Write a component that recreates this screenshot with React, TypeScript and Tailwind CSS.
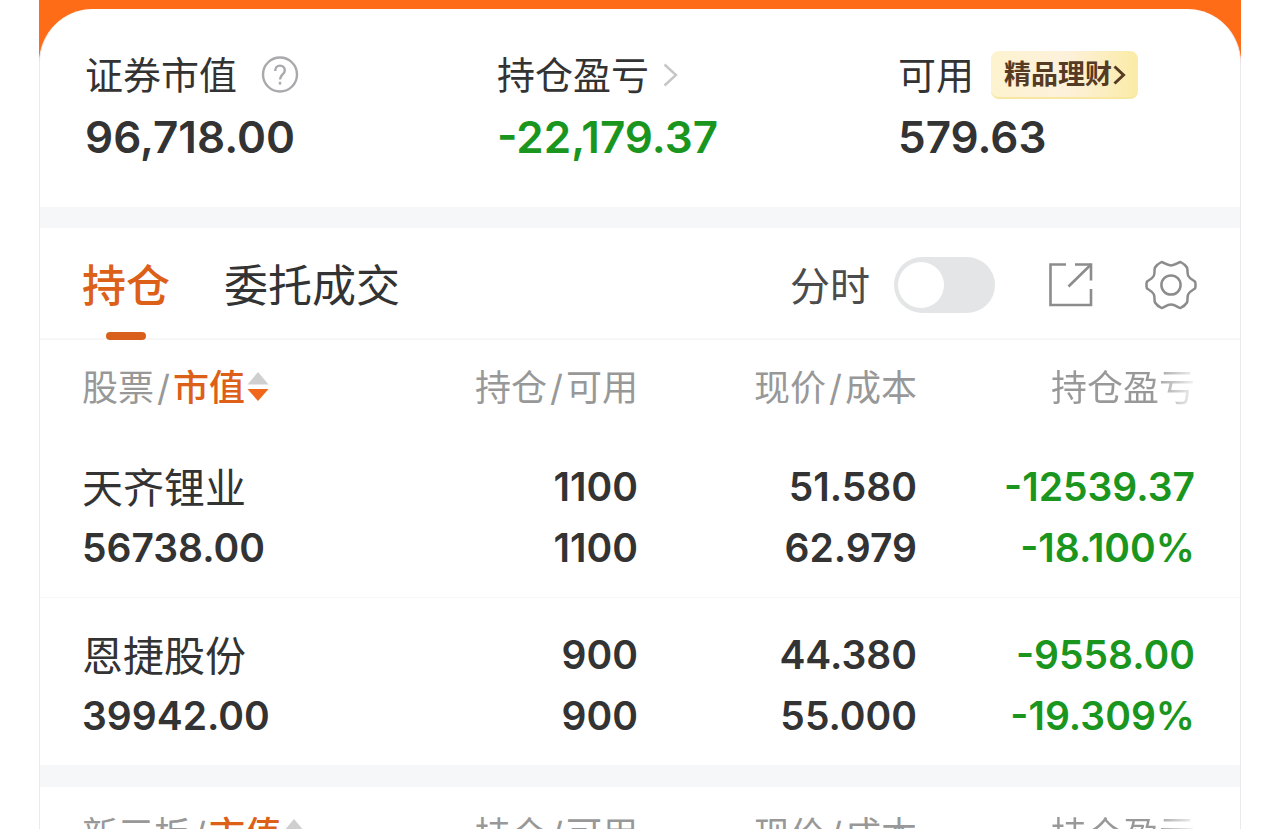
import React from "react";

type Holding = {
  name: string;
  value: string;
  amount: string;
  available: string;
  price: string;
  cost: string;
  profit: string;
  rate: string;
};

const holdings: Holding[] = [
  {
    name: "天齐锂业",
    value: "56738.00",
    amount: "1100",
    available: "1100",
    price: "51.580",
    cost: "62.979",
    profit: "-12539.37",
    rate: "-18.100%",
  },
  {
    name: "恩捷股份",
    value: "39942.00",
    amount: "900",
    available: "900",
    price: "44.380",
    cost: "55.000",
    profit: "-9558.00",
    rate: "-19.309%",
  },
];

function SortIcon() {
  return (
    <svg width="22" height="32" viewBox="0 0 22 32" className="ml-[2px] shrink-0" aria-hidden="true">
      <path d="M11 0 L21.5 12.5 H0.5 Z" fill="#cfcfcf" />
      <path d="M0.5 17 H21.5 L11 29 Z" fill="#f0661a" />
    </svg>
  );
}

function Slash() {
  return <span className="mx-[3px]">/</span>;
}

function Columns() {
  return (
    <colgroup>
      <col className="w-[320px]" />
      <col className="w-[278px]" />
      <col className="w-[279px]" />
      <col className="w-[323px]" />
    </colgroup>
  );
}

function HeaderRow({ label }: { label: string }) {
  return (
    <thead>
      <tr className="h-[90px] whitespace-nowrap text-4xl text-[#989898]">
        <th scope="col" className="pl-[42px] pt-[6px] text-left font-normal">
          <button type="button" className="flex items-center">
            {label}
            <Slash />
            <span className="font-medium text-[#dc6018]">市值</span>
            <SortIcon />
          </button>
        </th>
        <th scope="col" className="pt-[6px] text-right font-normal">
          持仓
          <Slash />
          可用
        </th>
        <th scope="col" className="pt-[6px] text-right font-normal">
          现价
          <Slash />
          成本
        </th>
        <th scope="col" className="pr-[45px] pt-[6px] text-right font-normal">
          <span className="bg-linear-to-r from-[#989898] from-70% to-[#f4f4f4] bg-clip-text text-transparent">
            持仓盈亏
          </span>
        </th>
      </tr>
    </thead>
  );
}

export default function App() {
  return (
    <div className="h-screen overflow-hidden bg-white font-['Inter','Noto_Sans_CJK_SC',sans-serif] text-[#333333]">
      <main className="mx-[39px] bg-[#ff6c17] pt-[9px]">
        <div className="rounded-t-[54px] border-x border-[#ebe9ec] bg-white">
          <section className="grid h-[198px] grid-cols-[412fr_401fr_342fr] pl-[45px] pt-[38px]">
            <div>
              <div className="flex h-14 items-center text-[38px]">
                证券市值
                <button type="button" aria-label="说明" className="ml-6">
                  <svg width="38" height="38" viewBox="0 0 38 38" fill="none" stroke="#a9a9ad" strokeWidth="2.4">
                    <circle cx="19" cy="18.5" r="17" />
                    <path d="M14.2 15 C14.2 11.6 16.2 9.6 19 9.6 C22 9.6 23.8 11.8 23.8 14.4 C23.8 18.4 19 18.6 19 23.6" />
                    <path d="M19 25.8 V28.6" />
                  </svg>
                </button>
              </div>
              <div className="h-17 text-[44px] leading-17 font-semibold">96,718.00</div>
            </div>
            <div>
              <button type="button" className="flex h-14 items-center text-[38px]">
                持仓盈亏
                <svg width="16" height="24" viewBox="0 0 16 24" fill="none" stroke="#c6c6c8" strokeWidth="2.4" className="ml-[14px]" aria-hidden="true">
                  <path d="M1.5 1.5 L13 12 L1.5 22.5" />
                </svg>
              </button>
              <div className="h-17 text-[44px] leading-17 font-semibold text-[#1a961e]">-22,179.37</div>
            </div>
            <div>
              <div className="flex h-14 items-center text-[38px]">
                可用
                <a
                  href="#wealth"
                  className="ml-[17px] flex h-12 items-center rounded-lg border-b-2 border-[#f8e7a0] bg-linear-to-r from-[#fdf3cf] via-[#fdf1dc] to-[#fbeba6] pl-[13px] pr-3 pt-[2px] text-[27px] font-bold text-[#563b24]"
                >
                  精品理财
                  <svg width="14" height="20" viewBox="0 0 14 20" fill="none" stroke="#563b24" strokeWidth="3" aria-hidden="true">
                    <path d="M2.5 1.5 L11.5 10 L2.5 18.5" />
                  </svg>
                </a>
              </div>
              <div className="h-17 text-[44px] leading-17 font-semibold">579.63</div>
            </div>
          </section>

          <div className="h-[21px] bg-[#f5f7f9]" />

          <section>
            <div className="flex h-28 items-stretch justify-between border-b-2 border-[#f8f7f8] pl-[42px] pr-[43px] text-[44px]">
              <div role="tablist" className="flex gap-[54px]">
                <button type="button" role="tab" aria-selected="true" className="relative pt-[6px] font-medium text-[#dc6018]">
                  持仓
                  <span className="absolute -bottom-[2px] left-1/2 h-2 w-10 -translate-x-1/2 rounded-full bg-[#d9601c]" />
                </button>
                <button type="button" role="tab" aria-selected="false" className="pt-[6px]">
                  委托成交
                </button>
              </div>
              <div className="flex items-center pt-1">
                <label htmlFor="timeline" className="pt-1 text-[40px] text-[#4c4c4c]">
                  分时
                </label>
                <input
                  id="timeline"
                  type="checkbox"
                  role="switch"
                  className="ml-6 flex h-14 w-[101px] appearance-none items-center rounded-full bg-[#e3e5e6] px-1 before:size-[46px] before:rounded-full before:bg-white checked:justify-end checked:bg-[#f0661a]"
                />
                <button type="button" aria-label="分享" className="ml-[53px]">
                  <svg width="46" height="46" viewBox="0 0 46 46" fill="none" stroke="#8c8c8c" strokeWidth="2.6">
                    <path d="M18 2.5 H2.5 V43 H43 V27" />
                    <path d="M27 2.5 H43 V18.5" />
                    <path d="M43 2.5 L20.5 24.5" />
                  </svg>
                </button>
                <button type="button" aria-label="设置" className="ml-[51px]">
                  <svg width="52" height="50" viewBox="0 0 52 50" fill="none" stroke="#8c8c8c" strokeWidth="2.5" strokeLinejoin="round">
                    <path d="M2 21.5 C5 19.5 7.5 18.5 8.8 15.8 C10 13 9 10.5 10 7.5 C11.5 5 13.5 3.5 16.5 2 C19.5 2.6 21.5 5.4 26 5.4 C30.5 5.4 32.5 2.6 35.5 2 C38.5 3.5 40.5 5 42 7.5 C43 10.5 42 13 43.2 15.8 C44.5 18.5 47 19.5 50 21.5 C50.8 24 50.8 26 50 28.5 C47 30.5 44.5 31.5 43.2 34.2 C42 37 43 39.5 42 42.5 C40.5 45 38.5 46.5 35.5 48 C32.5 47.4 30.5 44.6 26 44.6 C21.5 44.6 19.5 47.4 16.5 48 C13.5 46.5 11.5 45 10 42.5 C9 39.5 10 37 8.8 34.2 C7.5 31.5 5 30.5 2 28.5 C1.2 26 1.2 24 2 21.5 Z" />
                    <circle cx="26" cy="25" r="9.6" />
                  </svg>
                </button>
              </div>
            </div>

            <table className="w-full table-fixed border-collapse">
              <Columns />
              <HeaderRow label="股票" />
              <tbody>
                {holdings.map((item) => (
                  <tr
                    key={item.name}
                    className="whitespace-nowrap border-b border-[#f8f7f8] text-right text-[39px] leading-[61px] font-semibold last:border-b-0"
                  >
                    <td className="pb-[19px] pl-[42px] pt-[26px] text-left">
                      <div className="h-[61px] text-[41px] leading-[65px] font-normal">{item.name}</div>
                      <div>{item.value}</div>
                    </td>
                    <td className="pb-[19px] pt-[26px]">
                      <div>{item.amount}</div>
                      <div>{item.available}</div>
                    </td>
                    <td className="pb-[19px] pt-[26px]">
                      <div>{item.price}</div>
                      <div>{item.cost}</div>
                    </td>
                    <td className="pb-[19px] pr-[45px] pt-[26px] text-[#1a961e]">
                      <div>{item.profit}</div>
                      <div>{item.rate}</div>
                    </td>
                  </tr>
                ))}
              </tbody>
            </table>
          </section>

          <div className="h-[22px] bg-[#f5f7f9]" />

          <table className="w-full table-fixed border-collapse">
            <Columns />
            <HeaderRow label="新三板" />
          </table>
        </div>
      </main>
    </div>
  );
}
